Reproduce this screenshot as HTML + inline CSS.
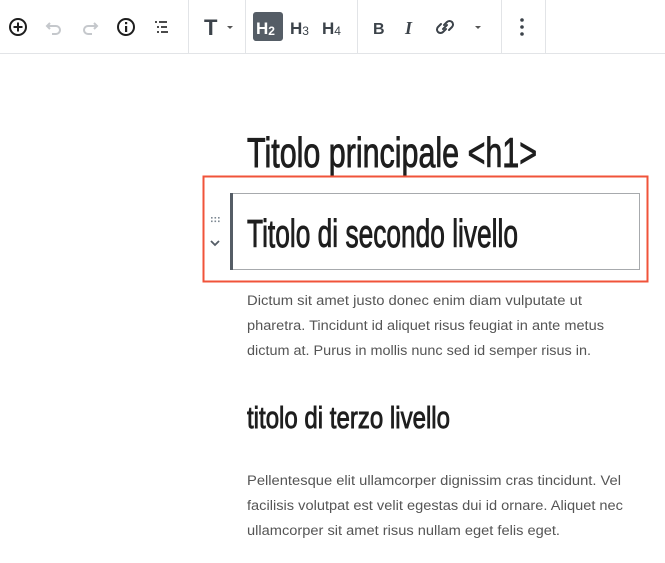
<!DOCTYPE html>
<html><head><meta charset="utf-8"><style>
html,body{margin:0;padding:0;background:#fff;width:665px;height:563px;overflow:hidden}
</style></head><body>
<svg width="665" height="563" viewBox="0 0 665 563" xmlns="http://www.w3.org/2000/svg" style="display:block">
<g stroke="#e2e4e7" stroke-width="1">
<line x1="0" y1="53.5" x2="665" y2="53.5"/>
<line x1="188.5" y1="0" x2="188.5" y2="53"/>
<line x1="245.5" y1="0" x2="245.5" y2="53"/>
<line x1="357.5" y1="0" x2="357.5" y2="53"/>
<line x1="501.5" y1="0" x2="501.5" y2="53"/>
<line x1="545.5" y1="0" x2="545.5" y2="53"/>
</g>
<g fill="none" stroke="#1e1e1e" stroke-width="2">
<circle cx="18" cy="27" r="8"/>
<line x1="18" y1="22.5" x2="18" y2="31.5"/><line x1="13.5" y1="27" x2="22.5" y2="27"/>
</g>
<g fill="none" stroke="#c5c8cc" stroke-width="2">
<path d="M50 23 L47 26 L50 29 M47 26 H56 a4 4 0 0 1 0 8 H52"/>
<path d="M94 23 L97 26 L94 29 M97 26 H88 a4 4 0 0 0 0 8 H92"/>
</g>
<g fill="none" stroke="#1e1e1e" stroke-width="2"><circle cx="126" cy="27" r="8"/></g>
<rect x="125" y="26" width="2.2" height="6" fill="#1e1e1e"/><rect x="125" y="22" width="2.2" height="2.2" fill="#1e1e1e"/>
<g stroke="#1e1e1e" stroke-width="1.6">
<line x1="155" y1="22" x2="157" y2="22"/><line x1="159" y1="22" x2="167" y2="22"/>
<line x1="157" y1="27" x2="159" y2="27"/><line x1="161" y1="27" x2="167" y2="27"/>
<line x1="157" y1="32" x2="159" y2="32"/><line x1="161" y1="32" x2="168" y2="32"/>
</g>
<text x="204" y="35" font-family="Liberation Sans, sans-serif" font-weight="bold" font-size="22" fill="#3c434a">T</text>
<path d="M227 26 h6 l-3 3z" fill="#555"/>
<rect x="253" y="12" width="30" height="29" rx="3" fill="#555d66"/>
<text x="256" y="34" font-family="Liberation Sans, sans-serif" font-weight="bold" font-size="17" fill="#fff">H<tspan font-size="12" dy="1">2</tspan></text>
<text x="290" y="34" font-family="Liberation Sans, sans-serif" font-weight="bold" font-size="17" fill="#3c434a">H<tspan font-size="12" font-weight="normal" dy="1">3</tspan></text>
<text x="322" y="34" font-family="Liberation Sans, sans-serif" font-weight="bold" font-size="17" fill="#3c434a">H<tspan font-size="12" font-weight="normal" dy="1">4</tspan></text>
<text x="373" y="34" font-family="Liberation Sans, sans-serif" font-weight="bold" font-size="16" fill="#3c434a">B</text>
<text x="405" y="34" font-family="Liberation Serif, serif" font-style="italic" font-weight="bold" font-size="18" fill="#3c434a">I</text>
<g fill="none" stroke="#3c434a" stroke-width="2" stroke-linecap="round">
<path d="M444 25 l3 -3 a3 3 0 0 1 5 5 l-3 3"/>
<path d="M446 29 l-3 3 a3 3 0 0 1 -5 -5 l3 -3"/>
<line x1="443" y1="29" x2="447" y2="25"/>
</g>
<path d="M475 26 h6 l-3 3z" fill="#555"/>
<circle cx="522" cy="20" r="1.8" fill="#3c434a"/><circle cx="522" cy="27" r="1.8" fill="#3c434a"/><circle cx="522" cy="34" r="1.8" fill="#3c434a"/>

<g font-family="Liberation Sans Narrow, Liberation Sans, sans-serif" fill="#1e1e1e" stroke="#1e1e1e" stroke-width="0.9">
<text x="247" y="167" font-size="42" textLength="290" lengthAdjust="spacingAndGlyphs">Titolo principale &lt;h1&gt;</text>
<text x="247" y="247" font-size="39" textLength="271" lengthAdjust="spacingAndGlyphs">Titolo di secondo livello</text>
<text x="247" y="428" font-size="31" textLength="203" lengthAdjust="spacingAndGlyphs">titolo di terzo livello</text>
</g>

<rect x="203.5" y="176.5" width="444" height="105" fill="none" stroke="#f0533a" stroke-width="2"/>
<rect x="230.5" y="193.5" width="409" height="76" fill="none" stroke="#a7aaad" stroke-width="1"/>
<rect x="230" y="193" width="3" height="77" fill="#555d66"/>
<g fill="#7e8993">
<rect x="211" y="217" width="1.6" height="1.6"/><rect x="214.5" y="217" width="1.6" height="1.6"/><rect x="218" y="217" width="1.6" height="1.6"/>
<rect x="211" y="220.5" width="1.6" height="1.6"/><rect x="214.5" y="220.5" width="1.6" height="1.6"/><rect x="218" y="220.5" width="1.6" height="1.6"/>
</g>
<path d="M211 241 l4 4 l4 -4" fill="none" stroke="#555d66" stroke-width="1.8"/>

<g font-family="Liberation Sans, sans-serif" font-size="13.5" fill="#555">
<text x="247" y="305" textLength="335" lengthAdjust="spacingAndGlyphs">Dictum sit amet justo donec enim diam vulputate ut</text>
<text x="247" y="330" textLength="357" lengthAdjust="spacingAndGlyphs">pharetra. Tincidunt id aliquet risus feugiat in ante metus</text>
<text x="247" y="355" textLength="344" lengthAdjust="spacingAndGlyphs">dictum at. Purus in mollis nunc sed id semper risus in.</text>
<text x="247" y="485" textLength="374" lengthAdjust="spacingAndGlyphs">Pellentesque elit ullamcorper dignissim cras tincidunt. Vel</text>
<text x="247" y="510" textLength="376" lengthAdjust="spacingAndGlyphs">facilisis volutpat est velit egestas dui id ornare. Aliquet nec</text>
<text x="247" y="535" textLength="313" lengthAdjust="spacingAndGlyphs">ullamcorper sit amet risus nullam eget felis eget.</text>
</g>
</svg>
</body></html>
